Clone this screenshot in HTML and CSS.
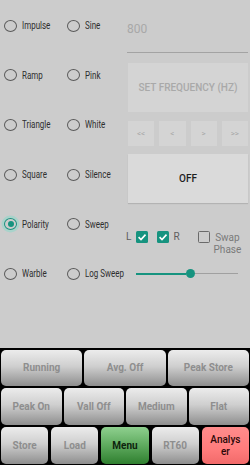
FILE: index.html
```html
<!DOCTYPE html>
<html>
<head>
<meta charset="utf-8">
<link rel="stylesheet" href="styles.css">
</head>
<body>
<div class="screen">
  <div class="top">
    <div class="waves">
      <div class="opt"><span class="radio"></span><span class="txt">Impulse</span></div>
      <div class="opt"><span class="radio"></span><span class="txt">Sine</span></div>
      <div class="opt"><span class="radio"></span><span class="txt">Ramp</span></div>
      <div class="opt"><span class="radio"></span><span class="txt">Pink</span></div>
      <div class="opt"><span class="radio"></span><span class="txt">Triangle</span></div>
      <div class="opt"><span class="radio"></span><span class="txt">White</span></div>
      <div class="opt"><span class="radio"></span><span class="txt">Square</span></div>
      <div class="opt"><span class="radio"></span><span class="txt">Silence</span></div>
      <div class="opt"><span class="radio on"></span><span class="txt">Polarity</span></div>
      <div class="opt"><span class="radio"></span><span class="txt">Sweep</span></div>
      <div class="opt"><span class="radio"></span><span class="txt">Warble</span></div>
      <div class="opt"><span class="radio"></span><span class="txt">Log Sweep</span></div>
    </div>
    <div class="controls">
      <div class="freq">800</div>
      <div class="btn set">SET FREQUENCY (HZ)</div>
      <div class="steps">
        <div class="step">&lt;&lt;</div>
        <div class="step">&lt;</div>
        <div class="step">&gt;</div>
        <div class="step">&gt;&gt;</div>
      </div>
      <div class="btn off">OFF</div>
      <div class="checks">
        <span class="ch-l">L</span>
        <span class="cb on"><svg viewBox="0 0 12 12" width="12" height="12"><path d="M2.6 6.2 L5 8.5 L9.5 3.6" fill="none" stroke="#fff" stroke-width="1.6"/></svg></span>
        <span class="cb on cb-r"><svg viewBox="0 0 12 12" width="12" height="12"><path d="M2.6 6.2 L5 8.5 L9.5 3.6" fill="none" stroke="#fff" stroke-width="1.6"/></svg></span>
        <span class="ch-r">R</span>
        <span class="cb off-box"></span>
        <span class="swap">Swap<br>Phase</span>
      </div>
      <div class="slider">
        <span class="fill"></span>
        <span class="thumb"></span>
        <span class="rest"></span>
      </div>
    </div>
  </div>
  <div class="panel">
    <div class="prow">
      <div class="pb">Running</div>
      <div class="pb">Avg. Off</div>
      <div class="pb">Peak Store</div>
    </div>
    <div class="prow">
      <div class="pb">Peak On</div>
      <div class="pb">Vall Off</div>
      <div class="pb">Medium</div>
      <div class="pb">Flat</div>
    </div>
    <div class="prow r3">
      <div class="pb">Store</div>
      <div class="pb">Load</div>
      <div class="pb menu">Menu</div>
      <div class="pb">RT60</div>
      <div class="pb analyser"><span class="wrap">Analyser</span></div>
    </div>
  </div>
</div>
</body>
</html>
```

FILE: styles.css
```css
html, body {
  margin: 0;
  padding: 0;
}
body {
  background: #cccccc;
  font-family: Roboto, "Liberation Sans", sans-serif;
}
.screen {
  width: 250px;
  height: 465px;
  overflow: hidden;
  display: flex;
  flex-direction: column;
}
.top {
  height: 348px;
  display: flex;
}
.waves {
  width: 124px;
  box-sizing: border-box;
  padding: 1px 0 0 4px;
  display: grid;
  grid-template-columns: 63px 1fr;
  grid-auto-rows: 49.6px;
  align-content: start;
}
.opt {
  display: flex;
  align-items: center;
  gap: 5px;
  white-space: nowrap;
}
.radio {
  width: 13px;
  height: 12px;
  box-sizing: border-box;
  border: 1.6px solid #5a5a5a;
  border-radius: 50%;
  flex: none;
  display: flex;
  align-items: center;
  justify-content: center;
}
.radio.on {
  border-color: #16937f;
  box-shadow: 0 0 0 2.5px #a9d3cb;
}
.radio.on::after {
  content: "";
  width: 6px;
  height: 6px;
  border-radius: 50%;
  background: #16937f;
}
.txt {
  font-size: 10.5px;
  color: #2e2e2e;
  display: inline-block;
  transform: scaleX(0.76);
  transform-origin: left center;
}
.controls {
  width: 120px;
  margin-left: 4px;
  display: flex;
  flex-direction: column;
}
.freq {
  box-sizing: border-box;
  height: 53px;
  border-bottom: 1px solid #a3a3a3;
  padding-top: 22px;
  font-size: 12px;
  line-height: 15px;
  color: #a8a8a8;
  margin-left: -1px;
}
.btn {
  height: 49px;
  display: flex;
  align-items: center;
  justify-content: center;
  font-size: 10px;
  font-weight: 500;
}
.set {
  margin-top: 10px;
  background: #d4d4d4;
  color: #a9a9a9;
}
.steps {
  margin-top: 9px;
  height: 25px;
  display: flex;
  gap: 5px;
}
.step {
  flex: 1;
  background: #d4d4d4;
  color: #a7a7a7;
  font-size: 8px;
  display: flex;
  align-items: center;
  justify-content: center;
}
.off {
  margin-top: 8px;
  background: #dadada;
  color: #1e1e1e;
  box-shadow: 0 1px 1px rgba(0,0,0,0.12);
}
.checks {
  margin-top: 28px;
  margin-left: -2px;
  display: flex;
  align-items: flex-start;
  font-size: 10px;
  line-height: 12px;
}
.ch-l {
  color: #5e5e5e;
  margin-right: 5px;
}
.cb {
  width: 12px;
  height: 12px;
  box-sizing: border-box;
  border-radius: 1.5px;
  flex: none;
}
.cb.on {
  background: #16937f;
}
.cb svg {
  display: block;
}
.cb-r {
  margin-left: 9px;
}
.ch-r {
  color: #5e5e5e;
  margin-left: 4px;
}
.off-box {
  margin-left: 18px;
  border: 1.6px solid #6a6a6a;
}
.swap {
  margin-left: 4px;
  color: #7a7a7a;
  font-size: 10px;
  line-height: 12px;
  text-align: center;
  padding-top: 1px;
}
.slider {
  margin-top: 13px;
  margin-left: 8px;
  width: 102px;
  height: 9px;
  display: flex;
  align-items: center;
}
.fill {
  width: 50px;
  height: 2px;
  background: #16937f;
}
.thumb {
  width: 9px;
  height: 9px;
  border-radius: 50%;
  background: #16937f;
  flex: none;
}
.rest {
  flex: 1;
  height: 1px;
  background: #a0a0a0;
}
.panel {
  flex: 1;
  background: #000;
  padding: 2px 1px 1px 1px;
  display: flex;
  flex-direction: column;
  gap: 2px;
}
.prow {
  display: flex;
  gap: 2px;
  height: 37px;
}
.prow:first-child {
  height: 36px;
}
.prow.r3 {
  gap: 3px;
}
.pb {
  flex: 1 1 0;
  min-width: 0;
  border-radius: 5px;
  background: linear-gradient(#ececec 0%, #cfcfcf 45%, #8e8e8e 100%);
  color: #8e8e8e;
  font-size: 10px;
  font-weight: 700;
  display: flex;
  align-items: center;
  justify-content: center;
  text-align: center;
  line-height: 12px;
}
.pb.menu {
  background: linear-gradient(#8fd08f 0%, #5eaa5e 50%, #2f7f2f 100%);
  color: #0e240e;
}
.pb.analyser {
  background: linear-gradient(#ff8c8c 0%, #ff7c7c 60%, #f26a6a 100%);
  color: #2a0808;
  font-weight: 500;
}
.wrap {
  width: 31px;
  word-break: break-all;
  text-align: center;
}
```
